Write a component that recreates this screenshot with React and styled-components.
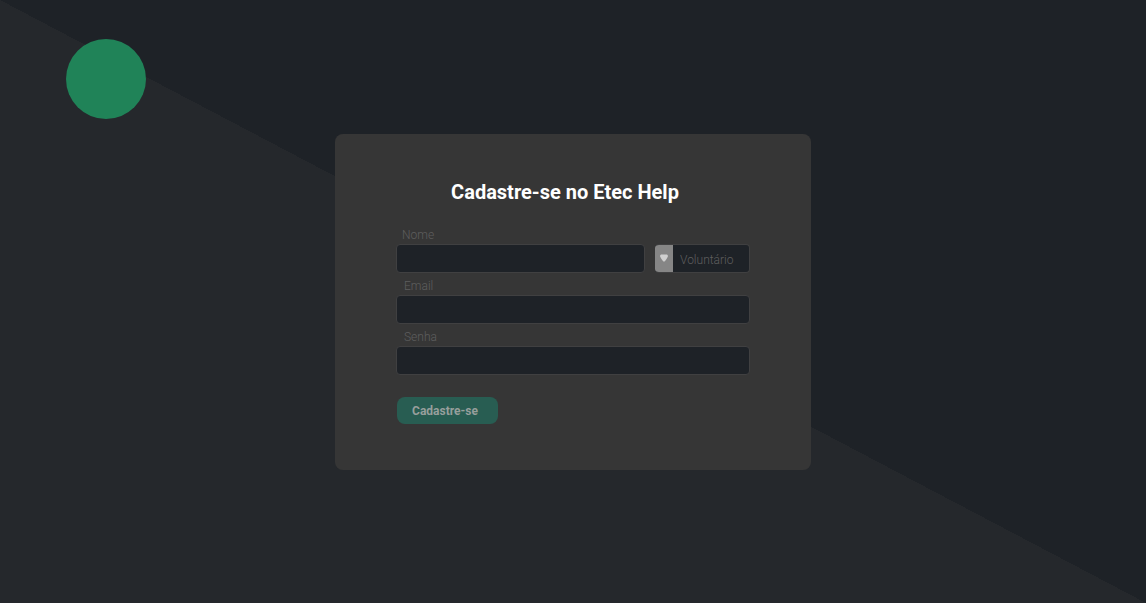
import React from 'react';
import styled, { createGlobalStyle } from 'styled-components';

const GlobalStyle = createGlobalStyle`
  *, *::before, *::after { box-sizing: border-box; }
  body {
    margin: 0;
    background: #1e2227;
    font-family: Roboto, "Liberation Sans", sans-serif;
  }
`;

const Page = styled.main`
  position: relative;
  min-height: 100vh;
  padding: 24px;
  display: flex;
  align-items: center;
  justify-content: center;
  background: linear-gradient(to top right, #25282c 50%, #1e2227 50%);
`;

const Disc = styled.div`
  position: absolute;
  top: 39px;
  left: 66px;
  width: 80px;
  height: 80px;
  border-radius: 50%;
  background: #208358;
`;

const Card = styled.form`
  position: relative;
  width: 100%;
  max-width: 476px;
  padding: 46px 61px;
  border-radius: 8px;
  background: #363636;
`;

const Title = styled.h1`
  margin: 0 16px 18px 0;
  font-size: 20px;
  line-height: 24px;
  font-weight: 700;
  text-align: center;
  color: #fff;
`;

const Row = styled.div`
  display: flex;
  align-items: flex-end;
  gap: 10px;
`;

const Field = styled.div`
  flex: 1;
  min-width: 0;
`;

const Label = styled.label`
  display: block;
  padding: 4px 0 0 ${({ $indent }) => $indent || 8}px;
  font-size: 12px;
  line-height: 18px;
  font-weight: 300;
  color: #5e5e5e;
`;

const Input = styled.input`
  display: block;
  width: 100%;
  height: 29px;
  padding: 0 8px;
  border: 1px solid #404041;
  border-radius: 4px;
  background: #1e2227;
  color: #ddd;
  font: inherit;
  font-size: 12px;
  outline: none;
`;

const SelectBox = styled.div`
  display: flex;
  width: 95px;
  height: 29px;
  border: 1px solid #404041;
  border-left: 0;
  border-radius: 4px;
  background: #1e2227;
  overflow: hidden;
`;

const Marker = styled.span`
  display: flex;
  flex: 0 0 18px;
  align-items: center;
  justify-content: center;
  background: #868686;
`;

const Select = styled.select`
  flex: 1;
  min-width: 0;
  padding: 4px 0 0 7px;
  border: 0;
  appearance: none;
  background: transparent;
  color: #5e5e5e;
  font: inherit;
  font-size: 12px;
  font-weight: 300;
  outline: none;
`;

const Submit = styled.button`
  display: block;
  width: 101px;
  height: 27px;
  margin: 22px 0 0 1px;
  padding: 1px 5px 0 0;
  border: 0;
  border-radius: 8px;
  background: #285d52;
  color: #979f9c;
  font: inherit;
  font-size: 12px;
  font-weight: 700;
  text-align: center;
`;

export default function App() {
  return (
    <>
      <GlobalStyle />
      <Page>
        <Disc />
        <Card onSubmit={(e) => e.preventDefault()}>
          <Title>Cadastre-se no Etec Help</Title>
          <Row>
            <Field>
              <Label htmlFor="nome" $indent={6}>Nome</Label>
              <Input id="nome" type="text" />
            </Field>
            <SelectBox>
              <Marker>
                <svg width="10" height="10" viewBox="0 0 10 10" aria-hidden="true">
                  <path d="M2.600 1.600H7.400C8.600 1.600 9.300 2.800 8.800 3.800C8.100 5.400 7.100 6.900 5.900 8.200C5.400 8.700 4.600 8.700 4.100 8.200C2.900 6.900 1.900 5.400 1.200 3.800C.7 2.800 1.400 1.600 2.600 1.600Z" fill="#d0d0d0" />
                </svg>
              </Marker>
              <Select aria-label="Tipo de cadastro" defaultValue="voluntario">
                <option value="voluntario">Voluntário</option>
              </Select>
            </SelectBox>
          </Row>
          <Field>
            <Label htmlFor="email">Email</Label>
            <Input id="email" type="email" />
          </Field>
          <Field>
            <Label htmlFor="senha">Senha</Label>
            <Input id="senha" type="password" />
          </Field>
          <Submit type="submit">Cadastre-se</Submit>
        </Card>
      </Page>
    </>
  );
}
